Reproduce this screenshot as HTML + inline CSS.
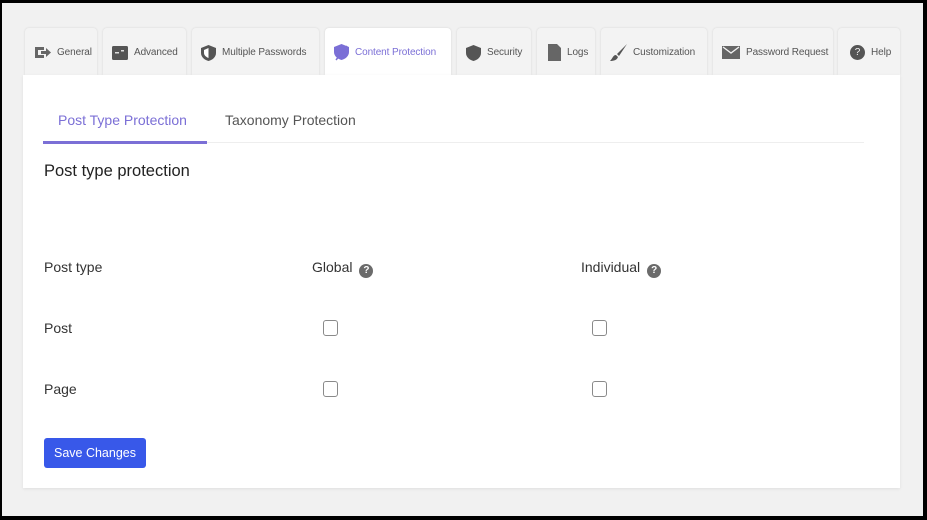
<!DOCTYPE html>
<html><head><style>
*{box-sizing:border-box;margin:0;padding:0}
body{width:927px;height:520px;background:#000;font-family:"Liberation Sans",sans-serif;position:relative;overflow:hidden}
.frame{position:absolute;left:2px;top:3px;width:921px;height:513px;background:#f1f1f1}
.tab{position:absolute;top:25px;height:47px;background:#f3f3f3;border-radius:4px 4px 0 0;box-shadow:0 0 2px rgba(0,0,0,.12);font-size:10px;letter-spacing:-0.1px;color:#555;display:flex;align-items:center;padding-left:9px;gap:6px;white-space:nowrap;padding-top:2px}
.tab.act{background:#fff;color:#7b6fd6}
.tab svg{flex:none}
.card{position:absolute;left:21px;top:72px;width:877px;height:413px;background:#fff;box-shadow:0 1px 3px rgba(0,0,0,.08)}
.t{position:absolute;font-size:14px}
.cb{position:absolute;width:15px;height:16px;border:1.3px solid #8a8a8a;border-radius:3px}
.q{display:inline-block;width:14px;height:14px;border-radius:50%;background:#6b6b6b;color:#fff;font-size:10px;font-weight:bold;text-align:center;line-height:14px;vertical-align:-1px;margin-left:7px}
</style></head><body>
<div class="frame">
<div class="tab" style="left:23px;width:72px"><svg width="17" height="13" viewBox="0 0 17 13"><path d="M1 1h9v3H4v5h6v3H1z" fill="#666"/><path d="M7 5h5V2l5 4.5-5 4.5V8H7z" fill="#666"/></svg>General</div>
<div class="tab" style="left:101px;width:83px"><svg width="16" height="14"><rect width="16" height="14" rx="1.5" fill="#555"/><rect x="3" y="6" width="4" height="1.5" fill="#ddd"/><rect x="9" y="4" width="3" height="1.5" fill="#ddd"/></svg>Advanced</div>
<div class="tab" style="left:190px;width:127px"><svg width="15" height="16" viewBox="0 0 15 16"><path d="M7.5 0L15 3v5c0 4-3.5 7-7.5 8C3.5 15 0 12 0 8V3z" fill="#555"/><path d="M7.5 3v10C5 12 3 10.2 3 8V5z" fill="#fff"/></svg>Multiple Passwords</div>
<div class="tab act" style="left:323px;width:126px"><svg width="15" height="17" viewBox="0 0 15 17"><path d="M7.5 0L15 3v5c0 4-3.5 7-7.5 8C3.5 15 0 12 0 8V3z" fill="#7b6fd6"/><path d="M2 16L13 2" stroke="#7b6fd6" stroke-width="1.5"/></svg>Content Protection</div>
<div class="tab" style="left:455px;width:74px"><svg width="15" height="16" viewBox="0 0 15 16"><path d="M7.5 0L15 3v5c0 4-3.5 7-7.5 8C3.5 15 0 12 0 8V3z" fill="#555"/></svg>Security</div>
<div class="tab" style="left:535px;width:58px;padding-left:11px"><svg width="13" height="17" viewBox="0 0 13 17"><path d="M0 0h9l4 4v13H0z" fill="#666"/></svg>Logs</div>
<div class="tab" style="left:599px;width:106px"><svg width="17" height="17" viewBox="0 0 17 17"><path d="M17 0L7 10l2 2z" fill="#555"/><path d="M6 11c-3 0-3 3-6 6 4 0 7-1 8-4z" fill="#555"/></svg>Customization</div>
<div class="tab" style="left:711px;width:120px"><svg width="18" height="13" viewBox="0 0 18 13"><rect width="18" height="13" fill="#666"/><path d="M1 1l8 6 8-6" stroke="#f3f3f3" stroke-width="1.3" fill="none"/></svg>Password Request</div>
<div class="tab" style="left:836px;width:62px;padding-left:12px"><span style="width:15px;height:15px;border-radius:50%;background:#555;color:#f3f3f3;font-size:10px;text-align:center;line-height:15px">?</span>Help</div>
<div class="card">
<div class="t" style="left:35px;top:37px;color:#7b6fd6;font-size:14px">Post Type Protection</div>
<div class="t" style="left:202px;top:37px;color:#555;font-size:14px">Taxonomy Protection</div>
<div style="position:absolute;left:20px;top:66px;width:164px;height:3px;background:#7b6fd6"></div>
<div style="position:absolute;left:184px;top:67px;width:657px;height:1px;background:#eee"></div>
<div class="t" style="left:21px;top:87px;font-size:16.5px;color:#222">Post type protection</div>
<div class="t" style="left:21px;top:184px;color:#333">Post type</div>
<div class="t" style="left:289px;top:184px;color:#333">Global<span class="q">?</span></div>
<div class="t" style="left:558px;top:184px;color:#333">Individual<span class="q">?</span></div>
<div class="t" style="left:21px;top:245px;color:#333">Post</div>
<div class="t" style="left:21px;top:306px;color:#333">Page</div>
<div class="cb" style="left:300px;top:245px"></div>
<div class="cb" style="left:569px;top:245px"></div>
<div class="cb" style="left:300px;top:306px"></div>
<div class="cb" style="left:569px;top:306px"></div>
<div style="position:absolute;left:21px;top:363px;width:102px;height:30px;background:#3858e9;border-radius:3px;color:#fff;font-size:12.5px;text-align:center;line-height:31px">Save Changes</div>
</div>
</div>
</body></html>
